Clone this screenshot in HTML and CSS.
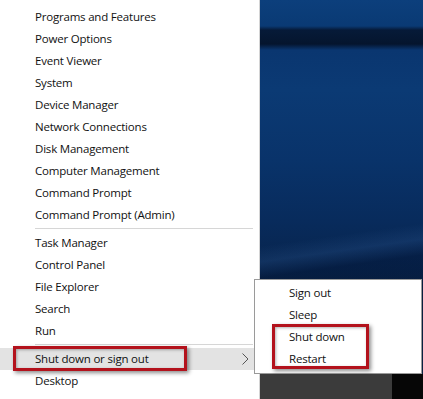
FILE: index.html
```html
<!DOCTYPE html>
<html lang="en">
<head>
    <meta charset="UTF-8">
    <meta name="viewport" content="width=device-width, initial-scale=1.0">
    <title>Quick Link Menu</title>
    <link rel="stylesheet" href="styles.css">
</head>
<body>
    <div class="screen">
        <!-- Win+X menu -->
        <div class="menu">
            <div class="menu-item">Programs and Features</div>
            <div class="menu-item">Power Options</div>
            <div class="menu-item">Event Viewer</div>
            <div class="menu-item">System</div>
            <div class="menu-item">Device Manager</div>
            <div class="menu-item">Network Connections</div>
            <div class="menu-item">Disk Management</div>
            <div class="menu-item">Computer Management</div>
            <div class="menu-item">Command Prompt</div>
            <div class="menu-item">Command Prompt (Admin)</div>
            <div class="separator"></div>
            <div class="menu-item">Task Manager</div>
            <div class="menu-item">Control Panel</div>
            <div class="menu-item">File Explorer</div>
            <div class="menu-item">Search</div>
            <div class="menu-item">Run</div>
            <div class="separator"></div>
            <div class="menu-item active">
                <span>Shut down or sign out</span>
                <svg class="chevron" width="7" height="12" viewBox="0 0 7 12">
                    <path d="M0.5 0.5 L6 6 L0.5 11.5" fill="none" stroke="#555" stroke-width="1"/>
                </svg>
                <div class="mark mark-main"></div>
            </div>
            <div class="menu-item">Desktop</div>
        </div>

        <!-- Desktop background -->
        <div class="desktop">
            <div class="wallpaper"></div>
            <div class="taskbar">
                <div class="taskbar-left"></div>
                <div class="taskbar-right"></div>
            </div>
        </div>

        <!-- Submenu -->
        <div class="submenu">
            <div class="menu-item">Sign out</div>
            <div class="menu-item">Sleep</div>
            <div class="menu-item">Shut down</div>
            <div class="menu-item">Restart</div>
            <div class="mark mark-sub"></div>
        </div>
    </div>
</body>
</html>
```

FILE: styles.css
```css
* {
    margin: 0;
    padding: 0;
    box-sizing: border-box;
}

body {
    font-family: 'Open Sans', 'Noto Sans', sans-serif;
    font-size: 11.5px;
    letter-spacing: -0.2px;
    color: #111;
    background: #fff;
}

.screen {
    position: relative;
    width: 423px;
    height: 399px;
    display: flex;
    overflow: hidden;
}

.menu {
    width: 260px;
    background: #fff;
    border-right: 1px solid #d4d4d4;
    padding-top: 6px;
}

.menu-item {
    position: relative;
    height: 22px;
    line-height: 22px;
    padding-left: 35px;
    white-space: nowrap;
}

.menu-item.active {
    background: #e3e3e3;
    margin-right: 5px;
    display: flex;
    align-items: center;
}

.chevron {
    position: absolute;
    left: 242px;
    top: 5px;
}

.separator {
    height: 1px;
    background: #d6d6d6;
    margin: 2px 6px 3px 35px;
}

.mark {
    position: absolute;
    border: 3px solid #b3121c;
    box-shadow: 2px 2px 4px rgba(0, 0, 0, 0.45), inset 1px 1px 3px rgba(0, 0, 0, 0.3);
}

.mark-main {
    left: 13px;
    top: -2px;
    width: 174px;
    height: 25px;
}

.desktop {
    flex: 1;
    display: flex;
    flex-direction: column;
}

.wallpaper {
    flex: 1;
    background:
        linear-gradient(172deg, transparent 0%, transparent 62%, rgba(80, 130, 200, 0.14) 66%, rgba(0, 10, 40, 0.25) 70%, transparent 100%),
        linear-gradient(180deg, #0c3f7c 0px, #0a3a74 26px, #061a38 30px, #05152e 44px, #0a3670 50px, #0b3a74 90px, #09336a 160px, #082b5c 220px, #07244c 270px, #0a2242 290px);
}

.taskbar {
    height: 25px;
    display: flex;
}

.taskbar-left {
    width: 132px;
    background: #3b3b3b;
}

.taskbar-right {
    flex: 1;
    background: #060606;
}

.submenu {
    position: absolute;
    left: 254px;
    top: 279px;
    width: 168px;
    height: 95px;
    background: #fff;
    border: 1px solid #9a9a9a;
    padding-top: 2px;
}

.submenu .menu-item {
    padding-left: 34px;
}

.mark-sub {
    left: 17px;
    top: 44px;
    width: 97px;
    height: 45px;
}
```
